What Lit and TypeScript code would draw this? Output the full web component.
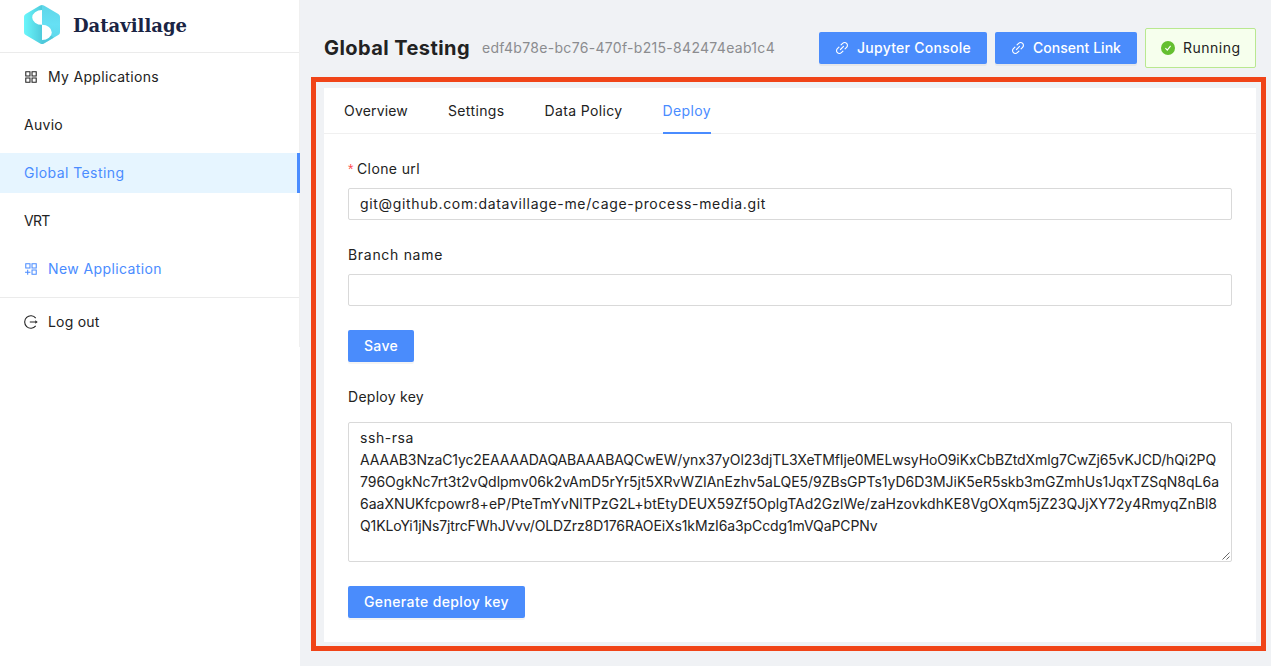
import { LitElement, html, css } from "lit";
import { customElement, property } from "lit/decorators.js";

/** A single line of text whose tracking is adjusted to fill a given measure. */
@customElement("fit-text")
class FitText extends LitElement {
  @property({ type: Number }) measure = 0;
  @property() text = "";
  static styles = css`
    :host { display: inline-block; white-space: pre; }
    .run { display: inline-block; }
  `;
  render() {
    return html`<span class="run">${this.text}</span>`;
  }
  updated() {
    const run = this.renderRoot.querySelector(".run") as HTMLElement;
    run.style.letterSpacing = "0px";
    const natural = run.getBoundingClientRect().width;
    const gap = (this.measure - natural) / this.text.length;
    run.style.letterSpacing = gap.toFixed(4) + "px";
  }
}

const t = (text: string, measure: number) => html`<fit-text .text=${text} .measure=${measure}></fit-text>`;

const gridIcon = html`<svg class="icon" viewBox="64 64 896 896" fill="currentColor"><path d="M464 144H160c-8.800 0-16 7.200-16 16v304c0 8.800 7.200 16 16 16h304c8.800 0 16-7.200 16-16V160c0-8.800-7.200-16-16-16zm-52 268H212V212h200v200zm452-268H560c-8.800 0-16 7.200-16 16v304c0 8.800 7.200 16 16 16h304c8.800 0 16-7.200 16-16V160c0-8.800-7.200-16-16-16zm-52 268H612V212h200v200zM464 544H160c-8.800 0-16 7.200-16 16v304c0 8.800 7.200 16 16 16h304c8.800 0 16-7.200 16-16V560c0-8.800-7.200-16-16-16zm-52 268H212V612h200v200zm452-268H560c-8.800 0-16 7.200-16 16v304c0 8.800 7.200 16 16 16h304c8.800 0 16-7.200 16-16V560c0-8.800-7.200-16-16-16zm-52 268H612V612h200v200z"/></svg>`;

const addIcon = html`<svg class="icon" viewBox="64 64 896 896" fill="none" stroke="currentColor" stroke-width="66"><path d="M177 177h270v270H177zM577 177h270v270H577zM577 577h270v270H577zM300 560v320M130 720h346"/></svg>`;

const logoutIcon = html`<svg class="icon" viewBox="0 0 14 14" fill="none" stroke="currentColor" stroke-width="1.1"><path d="M11.700 3.100a6.200 6.200 0 1 0 0 7.800M5.800 7h6"/><path d="M11.300 5.200 13.700 7l-2.400 1.800z" fill="currentColor" stroke="none"/></svg>`;

const linkIcon = html`<svg class="icon" viewBox="64 64 896 896" fill="currentColor"><path d="M574 665.400a8.030 8.030 0 0 0-11.300 0L446.500 781.600c-53.800 53.800-144.600 59.500-204 0-59.500-59.500-53.800-150.200 0-204l116.200-116.200c3.100-3.100 3.100-8.200 0-11.300l-39.800-39.800a8.030 8.030 0 0 0-11.300 0L191.400 526.500c-84.600 84.600-84.600 221.500 0 306s221.500 84.600 306 0l116.200-116.200c3.100-3.100 3.100-8.200 0-11.300L574 665.400zm258.600-474c-84.600-84.600-221.500-84.600-306 0L410.300 307.600a8.030 8.030 0 0 0 0 11.300l39.700 39.700c3.100 3.100 8.200 3.100 11.300 0l116.200-116.200c53.800-53.800 144.600-59.500 204 0 59.500 59.500 53.800 150.200 0 204L665.300 562.600a8.030 8.030 0 0 0 0 11.300l39.800 39.800c3.100 3.100 8.200 3.100 11.300 0l116.200-116.200c84.500-84.600 84.500-221.500 0-306.100zM610.100 372.300a8.030 8.030 0 0 0-11.300 0L372.300 598.700a8.030 8.030 0 0 0 0 11.300l39.600 39.600c3.100 3.100 8.200 3.100 11.300 0l226.400-226.400c3.100-3.100 3.100-8.200 0-11.300l-39.500-39.600z"/></svg>`;

const checkIcon = html`<svg class="icon" viewBox="0 0 14 14"><circle cx="7" cy="7" r="7" fill="#64bf30"/><path d="M4.400 7.200 6.300 9.200 9.600 4.900" fill="none" stroke="#fff" stroke-width="1.100"/></svg>`;

const logo = html`<svg class="mark" viewBox="0 0 36 39">
  <defs>
    <linearGradient id="left" x1="0" y1="0" x2="1" y2="0"><stop offset="0" stop-color="#6af6fb"/><stop offset="1" stop-color="#4fcbdc"/></linearGradient>
    <linearGradient id="right" x1="0" y1="0" x2="0" y2="1"><stop offset="0" stop-color="#5fd6e8"/><stop offset=".5" stop-color="#66e0f4"/><stop offset="1" stop-color="#5cd6e8"/></linearGradient>
  </defs>
  <path d="M18 0q-1 0-1.900.6L1.700 8.900Q0 9.900 0 11.800v15.400q0 1.900 1.700 2.900l14.400 8.300q.9.600 1.900.6z" fill="url(#left)"/>
  <path d="M18 0q1 0 1.900.6l14.400 8.300q1.700 1 1.700 2.900v15.400q0 1.900-1.700 2.900l-14.400 8.300q-.9.600-1.900.6z" fill="url(#right)"/>
  <path d="M18 39V35.200q6-.4 8.800-4.800l3 2.400-9.900 5.600q-.9.600-1.900.6z" fill="#43bccd" opacity=".55"/>
  <path d="M18 5A9.800 7.400 0 0 0 18 19.800zM18 19.800a9.800 7.600 0 0 1 0 15.200z" fill="#fff"/>
</svg>`;

const keyLines: [string, number][] = [
  ["ssh-rsa", 54],
  ["AAAAB3NzaC1yc2EAAAADAQABAAABAQCwEW/ynx37yOl23djTL3XeTMfIje0MELwsyHoO9iKxCbBZtdXmlg7CwZj65vKJCD/hQi2PQ", 856],
  ["796OgkNc7rt3t2vQdlpmv06k2vAmD5rYr5jt5XRvWZIAnEzhv5aLQE5/9ZBsGPTs1yD6D3MJiK5eR5skb3mGZmhUs1JqxTZSqN8qL6a", 859],
  ["6aaXNUKfcpowr8+eP/PteTmYvNlTPzG2L+btEtyDEUX59Zf5OplgTAd2GzlWe/zaHzovkdhKE8VgOXqm5jZ23QJjXY72y4RmyqZnBl8", 857],
  ["Q1KLoYi1jNs7jtrcFWhJVvv/OLDZrz8D176RAOEiXs1kMzI6a3pCcdg1mVQaPCPNv", 517.5],
];

@customElement("app-root")
class AppRoot extends LitElement {
  static styles = css`
    :host { display: flex; box-sizing: border-box; width: 100%; height: 666px; overflow: hidden; background: #f0f2f5;
      font: 400 14px/22px Inter, "Liberation Sans", sans-serif; color: #222; }
    * { box-sizing: border-box; }
    .icon { width: 14px; height: 14px; flex: none; display: block; }
    .side { width: 300px; flex: none; background: #fff; }
    .menu { border-right: 1px solid #f0f0f0; height: 347px; width: 300px; }
    .brand { height: 53px; border-bottom: 1px solid #ebebeb; padding: 5px 24px 0; display: flex; gap: 13px; }
    .mark { width: 36px; height: 39px; display: block; }
    .name { font: 700 18px/42px "DejaVu Serif", serif; color: #1a2444; }
    .item { height: 40px; margin-bottom: 8px; padding: 0 24px; display: flex; align-items: center; gap: 10px; }
    .item.first { margin-top: 4px; }
    .item.on { background: #e6f5ff; color: #4a8cff; border-right: 3px solid #4a8cff; width: 300px; }
    .item.new { color: #4a8cff; }
    .rule { border-top: 1px solid #ebebeb; margin: 8px 0 4px; }
    .main { flex: 1; min-width: 0; padding: 28px 5px 0 11px; }
    .head { display: flex; align-items: center; height: 40px; padding: 0 10px 0 13px; }
    .title { font-size: 20px; font-weight: 700; line-height: 32px; margin-right: 12px; }
    .uuid { color: #8b8c8f; flex: 1; }
    .btn { height: 32px; border-radius: 2px; background: #4a8cfc; color: #fff; font-weight: 500; padding: 0 16px; display: inline-flex; align-items: center; gap: 8px;
      box-shadow: 0 2px 0 rgba(0,0,0,.045); }
    .head .btn { margin-right: 8px; }
    .state { height: 40px; width: 111px; border: 1px solid #b9e890; border-radius: 2px; background: #f6ffed; padding: 0 15px; display: flex; align-items: center; gap: 8px; }
    .frame { margin-top: 9px; border: 5px solid #f04418; width: 955px; height: 574px; padding: 6px 5px 4px 8px; }
    .card { background: #fff; height: 554px; }
    .tabs { height: 46px; border-bottom: 1px solid #f0f0f0; padding: 0 20px; display: flex; gap: 40px; }
    .tab { height: 46px; padding-top: 12px; border-bottom: 2px solid transparent; }
    .tab.on { color: #4a8cff; border-color: #4a8cff; }
    .form { padding: 24px 24px 0; }
    .label { height: 22px; display: flex; gap: 4px; margin-bottom: 8px; }
    .req { color: #ff4d4f; font-family: "Liberation Sans", sans-serif; width: 5px; }
    .input { height: 32px; border: 1px solid #d9d9d9; border-radius: 2px; padding: 4px 11px; margin-bottom: 24px; }
    .key-label { margin: 24px 0 14px; }
    .area { height: 140px; border: 1px solid #d9d9d9; border-radius: 2px; padding: 4px 11px; margin-bottom: 24px; position: relative; }
    .line { height: 22px; white-space: nowrap; }
    .grip { position: absolute; right: 1px; bottom: 1px; width: 8px; height: 8px; }
  `;

  render() {
    return html`
      <aside class="side">
        <div class="menu">
          <div class="brand">${logo}<div class="name">${t("Datavillage", 114)}</div></div>
          <div class="item first">${gridIcon}${t("My Applications", 111)}</div>
          <div class="item">${t("Auvio", 39)}</div>
          <div class="item on">${t("Global Testing", 100.5)}</div>
          <div class="item">${t("VRT", 25.5)}</div>
          <div class="item new">${addIcon}${t("New Application", 114)}</div>
          <div class="rule"></div>
          <div class="item">${logoutIcon}${t("Log out", 51.5)}</div>
        </div>
      </aside>
      <main class="main">
        <header class="head">
          <div class="title">${t("Global Testing", 146)}</div>
          <div class="uuid">${t("edf4b78e-bc76-470f-b215-842474eab1c4", 293)}</div>
          <div class="btn">${linkIcon}${t("Jupyter Console", 114)}</div>
          <div class="btn">${linkIcon}${t("Consent Link", 88)}</div>
          <div class="state">${checkIcon}${t("Running", 57.5)}</div>
        </header>
        <div class="frame">
          <section class="card">
            <nav class="tabs">
              <div class="tab">${t("Overview", 64)}</div>
              <div class="tab">${t("Settings", 56.5)}</div>
              <div class="tab">${t("Data Policy", 78)}</div>
              <div class="tab on">${t("Deploy", 48.5)}</div>
            </nav>
            <div class="form">
              <div class="label"><span class="req">*</span>${t("Clone url", 63)}</div>
              <div class="input">${t("git@github.com:datavillage-me/cage-process-media.git", 406)}</div>
              <div class="label">${t("Branch name", 95)}</div>
              <div class="input"></div>
              <div class="btn">${t("Save", 34)}</div>
              <div class="label key-label">${t("Deploy key", 76)}</div>
              <div class="area">
                ${keyLines.map(([text, w]) => html`<div class="line">${t(text, w)}</div>`)}
                <svg class="grip" viewBox="0 0 8 8" stroke="#555" stroke-width=".9"><path d="M.5 7.500l7-7M4.500 7.500l3-3"/></svg>
              </div>
              <div class="btn">${t("Generate deploy key", 145)}</div>
            </div>
          </section>
        </div>
      </main>
    `;
  }
}
